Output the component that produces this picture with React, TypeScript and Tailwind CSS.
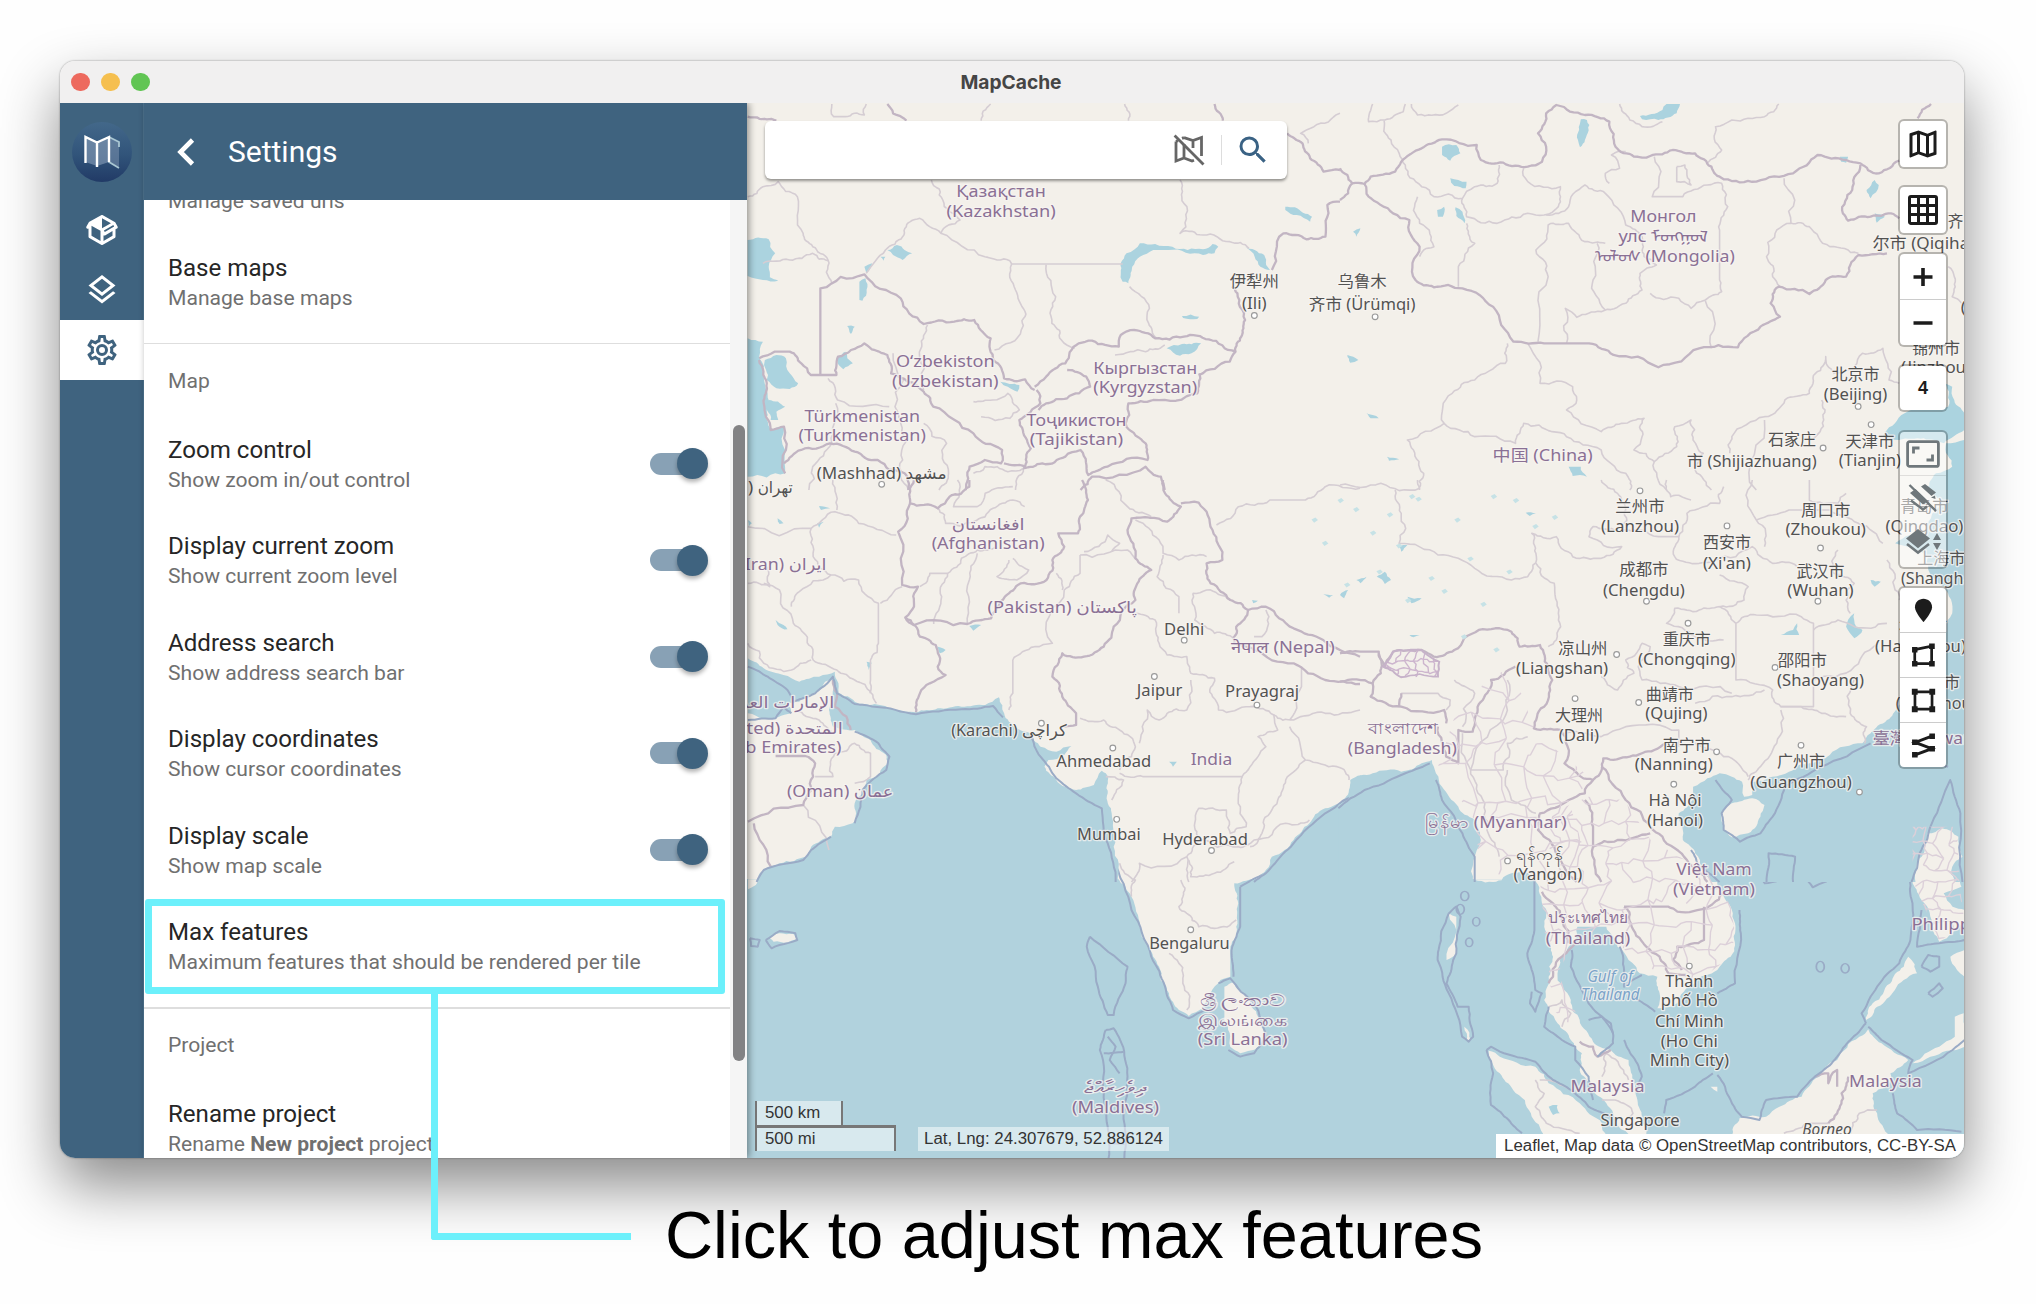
import React from "react";

/* ---------- geometry helpers ---------- */

type Pt = [number, number];

const parse = (s: string): Pt[] =>
  s.trim().split(/\s+/).map((p) => p.split(",").map(Number) as Pt);

function random(seed: number) {
  let s = (seed * 2654435761) >>> 0 || 1;
  return () => {
    s ^= s << 13;
    s >>>= 0;
    s ^= s >>> 17;
    s ^= s << 5;
    s >>>= 0;
    return s / 4294967296;
  };
}

/** Turns a coarse outline into a ragged one, as a surveyed border looks. */
function ragged(s: string, amount = 0.16, closed = false) {
  const pts = parse(s);
  if (closed) pts.push(pts[0]);
  const rnd = random(Math.round(pts[0][0] * 7 + pts[0][1] * 13 + pts.length));
  const out: Pt[] = [pts[0]];
  const split = (a: Pt, b: Pt, depth: number) => {
    const dx = b[0] - a[0];
    const dy = b[1] - a[1];
    if (depth === 0 || dx === 0 || dy === 0 || Math.hypot(dx, dy) < 12) {
      out.push(b);
      return;
    }
    const k = (rnd() - 0.5) * 2 * amount;
    const m: Pt = [(a[0] + b[0]) / 2 - dy * k, (a[1] + b[1]) / 2 + dx * k];
    split(a, m, depth - 1);
    split(m, b, depth - 1);
  };
  for (let i = 1; i < pts.length; i++) split(pts[i - 1], pts[i], 3);
  return "M" + out.map((p) => `${p[0].toFixed(1)} ${p[1].toFixed(1)}`).join("L") + (closed ? "Z" : "");
}

/** Irregular cells that fill a box. */
function cells(x: number, y: number, w: number, h: number, step: number) {
  const rnd = random(x + y + step);
  const cols = Math.ceil(w / step) + 1;
  const rows = Math.ceil(h / step) + 1;
  const g: Pt[][] = [];
  for (let r = 0; r <= rows; r++) {
    g.push([]);
    for (let c = 0; c <= cols; c++)
      g[r].push([
        x + (c + (r % 2) * 0.4 - 0.5) * step + (rnd() - 0.5) * step * 0.5,
        y + (r - 0.5) * step + (rnd() - 0.5) * step * 0.6,
      ]);
  }
  const edge = (a: Pt, b: Pt) => {
    const bend = () => (rnd() - 0.5) * step * 0.3;
    const p = (t: number) => `${(a[0] + (b[0] - a[0]) * t + bend()).toFixed(1)} ${(a[1] + (b[1] - a[1]) * t + bend()).toFixed(1)}`;
    return `M${a}L${p(0.33)}L${p(0.66)}L${b}`;
  };
  let d = "";
  for (let r = 0; r < rows; r++)
    for (let c = 0; c < cols; c++) {
      if (rnd() < 0.86) d += edge(g[r][c], g[r][c + 1]);
      if (rnd() < 0.78) d += edge(g[r][c], g[r + 1][c]);
    }
  return d;
}

type Region = {
  transform: string;
  sea?: string[];
  land?: string[];
  lakes?: string[];
  country?: string[];
  province?: string[];
  maritime?: string[];
};

/* ---------- map data, one entry for each sheet ---------- */

const NW: Region = {
  transform: "translate(740 90) scale(0.38265 0.33333)",
  lakes: [
    "20,450 75,448 92,490 75,530 78,562 100,572 60,570 20,558",
    "20,745 60,755 50,800 62,860 70,960 80,1020 115,1010 118,1150 20,1160",
    "65,810 95,795 120,805 130,850 152,880 130,897 95,895 70,870",
    "75,930 118,950 95,965 100,990 80,990",
    "995,520 1010,490 1045,460 1085,462 1130,470 1170,480 1210,478 1235,462 1250,470 1240,490 1210,495 1165,488 1120,480 1080,480 1045,500 1025,530 1015,580 1000,575",
    "1320,470 1345,480 1370,495 1375,525 1385,540 1360,530 1345,500",
    "1115,775 1155,762 1205,760 1180,790 1150,797",
    "1425,350 1450,352 1495,380 1490,395 1455,375 1425,360",
    "385,480 410,465 430,480 450,490 425,510 400,495",
    "255,800 275,785 295,820 270,838 258,825",
    "312,575 328,565 320,632 312,630",
    "280,708 300,710 290,732",
    "1155,678 1200,680 1195,687 1158,684",
    "680,875 730,885 725,905 700,890",
    "325,530 345,520 330,550",
    "367,500 380,500 375,512",
  ],
  country: [
    "20,80 70,88 95,92",
    "385,42 400,70 435,92",
    "1240,42 1262,92",
    "1430,130 1470,160 1490,205 1525,245 1568,240",
    "1568,335 1535,345 1530,440 1480,448 1420,430 1390,540",
    "210,855 210,595 325,553 420,625 480,702 560,695 612,690 655,745 662,810 690,865 745,868 770,900",
    "50,805 90,785 130,785 160,820 185,855 252,855 256,800 290,780 325,760 385,795 395,850 480,905 505,950 610,1030 685,1080 682,1120 640,1110 600,1130 590,1200",
    "770,890 800,860 850,820 885,760 920,752 990,770 995,735 1030,720 1085,745 1160,740 1225,748 1295,785 1310,740 1320,690 1300,610 1285,590",
    "1295,785 1280,815 1200,855",
    "775,900 785,940 730,990 750,1050 760,1075 745,1130 690,1120",
    "855,840 905,860 915,890 855,925 800,940 780,960",
    "1200,850 1195,910 1080,930 1015,940 1010,1010 1060,1060 1065,1110 960,1130 910,1155 890,1080 850,1100 790,1120 740,1135",
    "115,1120 160,1080 235,1060 300,1085 360,1110 390,1140 430,1150 440,1200",
    "890,1200 920,1160 1060,1130 1100,1160 1110,1200",
    "50,810 70,880 62,940 80,1020 115,1010 118,1150",
  ],
  province: [
    "240,42 245,80 275,80 325,75 330,42",
    "655,42 630,92",
    "1005,42 1015,92",
    "1568,70 1500,110 1465,130 1485,160",
    "20,320 60,290 100,275 150,320 165,430 190,470 230,510 240,580",
    "60,520 130,510 190,490 230,512",
    "500,270 530,330 575,390 525,430 470,385 445,395 425,440 380,480 330,550",
    "525,430 640,500 705,512 710,522 1000,522",
    "710,522 720,600 745,665 735,720 665,780",
    "800,524 825,620 815,700 840,750 875,775",
    "1150,270 1160,340 1150,430 1210,435 1280,455 1330,475",
    "1018,590 1070,655 1068,700 1090,745",
    "400,790 405,950 420,1000 425,1110 440,1200",
    "230,865 255,930 390,950",
    "490,705 475,770 480,900",
    "250,940 240,1060 190,1130 180,1200",
    "480,1000 540,1060 545,1150 520,1200",
    "610,935 660,930 700,910 730,960 705,985 630,980",
    "980,795 1060,785 1110,765",
    "610,1150 640,1130 700,1145 740,1135 720,1200",
  ],
};

const NE: Region = {
  transform: "translate(1340 90) scale(0.40816 0.33333)",
  lakes: [
    "250,170 285,165 295,190 270,212 250,195",
    "590,88 605,90 600,150 588,172 583,150",
    "735,78 790,60 800,42 833,42 825,70 780,90 740,88",
    "270,265 310,275 308,295 280,288",
    "238,360 255,350 252,380 240,380",
    "283,352 300,365 305,400 285,378",
    "32,425 50,415 40,440",
    "18,795 45,810 25,818",
    "1290,300 1310,270 1320,285 1300,325",
    "1225,200 1245,200 1240,218 1228,215",
    "560,1130 590,1130 605,1160 570,1158",
    "1310,370 1335,380 1315,398",
    "1340,1020 1390,965 1420,960 1490,950 1480,880 1500,890 1505,930 1530,980 1530,1020 1480,1060 1430,1045 1370,1050 1330,1040",
    "1485,1060 1530,1050 1530,1200 1440,1200 1460,1150 1500,1130",
    "60,965 80,975 95,985 75,985",
    "115,1100 145,1108 120,1112",
  ],
  country: [
    "0,235 30,280 60,282 75,260 135,245 150,215 200,175 250,148 335,165 345,210 400,218 460,230 495,215 505,170 485,130 505,70 530,45 600,75 660,95 675,170 720,200 760,198 815,180 870,190 910,230 940,268 1020,275 1110,250 1170,195 1240,210 1275,220 1320,250 1370,212",
    "60,282 70,320 130,370 170,390 195,470 185,570 230,592 300,595 375,650 425,755 500,760 610,760 670,795 780,832 880,775 975,772 1030,710 1078,680 1055,640 1075,590 1150,612 1190,570 1240,560 1270,495 1340,490",
    "1275,225 1255,300 1232,370 1245,392 1300,380 1350,370 1370,385",
    "1448,42 1415,85",
    "0,330 20,310 30,280",
  ],
  province: [
    "80,42 70,95 110,90 155,65 160,42",
    "175,42 190,75 260,70 290,45",
    "108,92 125,150 145,190 160,225 200,290 230,320 300,325 330,290 385,280 390,225",
    "190,320 195,400 230,470 205,480 195,500",
    "300,325 310,380 385,400 460,370 500,375 535,350 540,290 460,275 450,235",
    "290,590 290,530 330,460 310,400",
    "485,755 510,560 480,480 510,405 560,400 600,455 650,460",
    "505,375 560,350 600,285 650,310 700,405 740,440 745,500 775,525 735,550 740,600 700,640 640,665 580,682 552,655 555,760",
    "660,280 650,250 685,235 665,195 700,185",
    "770,200 765,320 840,320 900,285 935,280 950,350 930,420 930,570 935,605 895,630 860,655 830,625 760,610",
    "1088,265 1105,400 1150,410 1200,470 1270,490",
    "1105,400 1070,420 1045,500 1060,560 1078,590",
    "895,632 910,775",
    "685,42 710,90 740,110 790,95",
    "900,220 935,180 920,110 960,90 1040,80 1075,42",
    "825,230 845,225 850,255 860,285 825,275 825,230",
    "410,760 405,820 330,870 275,910 255,1000 165,1050 180,1080 205,1150 195,1200",
    "460,760 490,880 570,890 580,930 555,960 640,1025 690,1000 745,985 740,1040 720,1080 770,1115 800,1200",
    "255,1000 330,1040 430,1060 450,1000 520,1025 555,1040 640,1080 700,1150 710,1200",
    "770,1115 825,1070 820,1010 860,990 865,1050 890,1090 870,1140 910,1200",
    "955,1090 960,1040 1040,980 1090,930 1150,910 1165,850 1190,800 1210,850 1260,830 1280,790 1330,775 1345,870 1370,880",
    "1180,930 1185,990 1150,1050",
    "1040,990 1020,1200",
    "630,460 620,570 650,660",
    "1490,530 1505,560 1500,620 1530,660",
  ],
};

const W: Region = {
  transform: "translate(740 480) scale(0.39541 0.33333)",
  sea: [
    "20,535 60,565 110,585 150,605 200,590 240,575 245,600 250,640 290,665 340,672 445,697 500,685 560,680 620,675 655,652 668,700 700,745 735,760 760,800 800,815 838,798 820,825 780,840 770,860 800,900 850,930 895,915 915,872 925,880 930,940 940,1000 945,1100 955,1206 45,1206 50,1180 100,1150 170,1130 180,1100 230,1070 240,1040 285,1030 290,970 320,900 375,850 370,825 330,780 290,750 235,740 225,690 235,600 215,605 190,640 150,665 120,670 130,700 60,715 20,700",
    "1570,885 1540,930 1530,955 1480,985 1440,1030 1400,1080 1345,1130 1330,1170 1290,1206 1570,1206",
  ],
  lakes: [
    "200,78 228,85 205,90",
    "95,115 110,130 100,132",
    "195,130 212,125 200,143",
    "320,545 333,548 325,570",
    "495,495 520,510 505,520",
    "580,438 610,435 590,452",
    "90,420 110,435 120,448 95,435",
    "20,120 30,130 22,140",
    "1085,845 1105,845 1095,860",
    "1475,342 1500,345 1490,353",
    "1295,360 1310,362 1298,370",
  ],
  country: [
    "440,0 430,70 400,155 410,315 450,320 440,380 418,412 440,435 575,432 635,415 670,350 710,310 775,300 790,240 820,200 805,160 855,160 860,110 880,60 865,0",
    "430,70 500,85 530,50 580,20 580,0",
    "418,412 455,470 495,495 500,560 520,585 480,610 455,640 445,697",
    "1070,0 1075,40 1115,80 1080,125 990,115 980,150 1000,235 1040,270 1005,310 1000,360 945,440 920,500 870,530 815,520 790,590 815,650 850,700 850,735 820,740",
    "1115,70 1160,68 1195,150 1220,240 1180,250 1190,310 1240,360 1285,390 1330,380 1400,445 1475,480 1568,530",
    "1285,390 1255,440 1250,490 1300,510 1400,550 1480,600 1568,612",
    "20,1025 160,975 185,890 190,850 165,828 90,828",
    "35,1030 78,1160",
    "235,600 240,680 280,750",
  ],
  province: [
    "20,140 180,145 240,95 300,130 395,165",
    "235,0 245,90",
    "180,145 185,230 230,285 300,300 350,370 350,490 330,540 330,600 345,670",
    "60,310 100,330 135,430 170,480 185,540 245,570 290,600 330,640",
    "230,285 150,335 130,380",
    "20,490 60,550 130,570 180,540",
    "20,310 75,320 70,260",
    "410,320 355,370",
    "455,320 480,280 525,280 560,235 600,210 650,200",
    "525,280 510,350 490,432",
    "600,220 580,300 575,432",
    "680,240 650,290 700,300 730,270 690,235",
    "860,225 860,280 820,330 790,490 745,500 690,540 690,640 680,690",
    "800,280 815,330",
    "860,225 980,210 1005,240",
    "870,215 930,165 960,190 940,215",
    "550,0 540,80 600,80 620,40 690,20",
    "500,85 520,130 590,125 640,85 690,60 720,80",
    "925,0 980,80 1040,110",
    "1000,120 1060,180 1070,220 1110,240 1180,230",
    "1070,225 1055,290 1110,350 1110,400",
    "1000,400 1050,420 1060,490 1080,525 1130,530 1140,580 1200,595 1195,650 1210,690 1290,680 1350,705 1360,750 1310,770 1330,800 1290,860 1270,890 1020,890 960,880",
    "1145,340 1150,420 1200,460 1250,475",
    "1145,340 1180,330 1240,360",
    "860,715 920,720 960,750 1000,800 990,830 960,870",
    "1010,790 1030,690 1060,720 1080,700 1130,690 1140,600",
    "1270,890 1260,960 1280,1040 1240,1060 1230,990 1160,985 1150,1030 1160,1080 1130,1130 1010,1150 990,1206",
    "1350,705 1400,720 1480,700 1568,690",
    "1420,560 1420,620 1390,720",
    "1390,740 1430,840 1510,860 1540,900",
    "1430,840 1380,900 1360,960 1340,1000 1320,1060 1290,1100",
    "925,890 970,900 940,960",
    "1160,1080 1260,1100 1300,1080 1380,1030 1440,1020",
    "190,890 235,890 240,820 290,790 330,820 330,890 290,910",
    "160,975 225,1110",
    "140,690 200,720 235,760",
    "1205,135 1260,80 1340,60 1430,60 1480,20 1568,25",
    "1330,390 1320,470 1300,470",
    "1130,1130 1135,1206",
  ],
  maritime: [
    "20,560 70,590 120,630 135,665 190,640 235,590 245,640 290,672 340,680 445,703 560,688 640,678 665,712",
    "735,765 760,830 800,895 850,940 915,985 930,1090 950,1206",
    "290,755 350,790 378,830 370,870 310,930 290,1030",
    "1568,930 1480,1000 1400,1090 1345,1160 1300,1206",
    "20,720 90,715 110,680 130,700",
    "230,1070 180,1110 160,1140 60,1170 42,1206",
  ],
};

const E: Region = {
  transform: "translate(1340 480) scale(0.40816 0.33333)",
  sea: [
    "-4,975 20,960 25,900 80,880 150,875 200,850 225,840 235,880 250,920 290,980 330,1020 345,1080 325,1206 -4,1206",
    "865,920 900,895 930,880 960,890 985,905 990,950 1010,945 1010,905 1060,890 1100,875 1150,850 1200,825 1280,790 1300,760 1340,720 1365,680 1420,600 1470,500 1500,400 1480,320 1450,290 1440,230 1400,200 1360,190 1440,150 1475,60 1440,20 1480,-4 1534,-4 1534,1206 910,1206 870,1120 840,1080 830,1000 865,960",
    "400,1192 425,1178 462,1180 472,1206 395,1206",
  ],
  land: [
    "935,1000 960,970 1010,955 1040,975 1030,1010 1000,1060 960,1072 940,1050",
    "1410,1206 1425,1130 1440,1060 1475,1045 1515,1070 1525,1130 1500,1160 1505,1206",
  ],
  lakes: [
    "90,290 110,275 125,300 110,312",
    "165,350 200,355 175,370",
    "455,98 480,100 465,108",
    "1080,465 1110,450 1120,430 1125,465",
    "1240,440 1260,400 1265,440 1280,450 1260,475",
    "1300,300 1325,305 1310,320",
    "40,300 65,290 50,310",
    "170,465 195,465 180,472",
    "145,200 165,195 150,215",
    "0,345 20,330 10,355",
  ],
  country: [
    "0,520 50,515 95,515 110,560 130,515 200,510 230,530 280,510 340,450 420,455 440,500 490,495 510,560 520,600 500,680 475,745 540,750 550,850 590,890 620,900 645,835 710,830 770,810 800,790",
    "0,605 80,610 100,580 95,520",
    "80,610 75,650 150,680 255,690 260,730",
    "150,640 145,680",
    "430,560 370,600 350,660 330,720 325,755 290,750 290,850 260,830 240,740",
    "620,900 600,940 560,960 490,1000 485,1050 525,1100 580,1206",
    "640,860 700,960 760,1040 790,1070 850,1140 900,1206",
    "620,1100 680,1080 760,1060",
    "600,960 620,1040 620,1100 640,1206",
  ],
  province: [
    "0,15 100,10 195,25 190,0",
    "135,30 150,100 145,190 240,225 330,265 420,300 460,290 480,220 470,160 530,170 570,230 640,235 690,200 610,170 620,140 680,150",
    "480,250 525,310 535,400 530,480 510,500",
    "640,0 680,40 700,90 690,150 780,170 830,170 820,230 880,250 920,240 1010,200 1060,250 1120,260",
    "930,285 1000,320 990,360 930,380 880,390 820,385 800,430 870,470 940,480",
    "930,380 970,430 970,600 1060,630 1080,680 1160,680 1160,580 1160,430 1130,410 1020,405 970,430",
    "1160,450 1220,420 1260,440 1340,430",
    "1160,600 1260,560 1320,480",
    "640,590 680,630 720,580 700,540 740,490 760,500 740,600 830,620 960,640",
    "540,760 640,770 700,740 830,750 830,800",
    "1080,690 1070,790 1030,860 1000,900",
    "1080,680 1130,680 1180,700 1240,710",
    "1260,600 1250,700 1290,740 1285,790",
    "1010,0 1020,120 1040,200",
    "1150,0 1150,60 1220,70 1240,40",
    "1020,120 1100,90 1200,90 1270,130 1330,190",
    "830,170 850,100 930,70 940,20",
    "800,0 810,50 860,60",
    "1220,210 1210,280 1260,310 1240,360 1250,400",
    "1340,240 1360,330 1370,360",
    "410,600 400,720 320,870 400,870 410,790 460,770",
    "300,760 320,870 350,960 360,1050 390,1130",
    "150,640 240,640 270,660 260,690",
    "410,870 420,960 480,1000",
    "870,790 940,830 1000,890",
    "870,670 960,650 1040,630",
    "280,600 330,640 300,740",
  ],
  maritime: [
    "235,900 250,960 300,1060 330,1130 330,1206",
    "-4,985 60,930 150,885 220,850",
    "1300,790 1180,860 1090,920 1060,1010 1030,1060 980,1085 940,1050 935,1000 960,960 920,900",
    "1045,1206 1050,1120 1115,1130 1110,1206",
    "1400,1206 1420,1120 1450,1030 1495,900 1520,1000 1525,1206",
    "860,1110 880,1160 930,1206",
    "1480,700 1450,850 1490,860",
  ],
};

const SW: Region = {
  transform: "translate(740 860) scale(0.39541 0.33333)",
  land: [
    "955,55 975,80 990,110 1010,200 1030,260 1060,320 1085,400 1110,450 1135,468 1170,445 1190,400 1215,360 1240,350 1240,260 1255,200 1260,130 1250,70 1280,62 1300,55",
    "1225,380 1250,368 1280,410 1310,470 1325,520 1305,568 1265,580 1240,560 1225,480",
    "20,58 48,58 40,75 20,88",
    "75,235 100,220 135,222 145,235 120,248 85,245",
  ],
  province: [
    "960,10 1000,60 990,110",
    "1115,60 1120,110 1110,140 1130,160 1160,200 1200,205 1255,180",
    "1085,280 1110,310 1120,370 1130,450",
    "1135,0 1140,50 1200,40 1250,5",
  ],
  maritime: [
    "885,230 980,320 975,370 945,465 930,465 905,380 877,260 885,230",
    "945,-4 990,150 1040,290 1075,380 1095,450 1135,475 1175,450",
    "1265,80 1265,200 1245,260 1248,350",
    "925,510 945,505 965,550 980,650 970,760 972,895",
    "925,510 910,570 920,700 930,800 932,895",
    "1370,-4 1330,40 1265,80",
    "1210,370 1240,355 1300,430 1330,530 1300,580 1265,590 1235,570",
    "65,240 80,265 100,255 145,240 140,220 100,213 65,240",
    "25,235 50,240 45,260 28,258 25,235",
    "930,530 950,560 935,600 960,640",
    "920,580 970,575",
    "935,850 972,852",
  ],
};

const SE: Region = {
  transform: "translate(1340 860) scale(0.44389 0.33333)",
  land: [
    "300,58 310,62 345,66 370,58",
    "438,56 455,130 460,200 470,240 480,290 470,350 460,420 468,450 490,490 520,540 545,580 540,630 570,680 600,730 620,790 650,822 690,822 680,780 670,720 660,660 650,600 610,570 570,545 540,480 520,420 500,380 490,340 500,290 515,260 530,240 535,200 600,200 625,260 650,300 675,340 715,350 720,400 715,445 760,430 800,370 850,330 880,290 890,220 880,140 860,90 845,56",
    "335,572 360,590 440,620 470,670 540,730 590,790 600,830 460,830 430,760 390,690 360,640",
    "880,830 900,775 960,770 990,740 1040,710 1080,650 1120,600 1170,530 1190,508 1220,550 1280,600 1240,640 1230,680 1200,700 1210,760 1240,830",
    "1185,480 1200,430 1240,370 1270,320 1280,290 1300,340 1250,390 1210,440",
    "1290,56 1395,56 1400,80 1360,100 1380,140 1407,150 1407,190 1350,245 1335,200 1310,120",
    "1385,470 1405,460 1407,560 1330,590 1290,610 1350,560 1385,530",
    "1375,290 1407,270 1407,350 1390,330",
    "245,160 262,170 262,280 240,300",
    "280,500 295,540 285,542",
    "835,680 850,680 850,695",
  ],
  lakes: ["470,740 490,735 495,760 480,765", "640,400 650,410 645,425"],
  country: [
    "640,140 740,140 760,155 830,140 870,90",
    "640,140 655,190 690,260 720,290 740,340 780,345",
    "820,140 820,240 760,260 750,300 770,330",
    "530,240 500,290 470,370",
    "540,545 570,560 580,590 610,570",
    "455,95 480,130 500,180 515,250",
    "1100,790 1120,760 1130,700 1145,650",
    "1070,650 1100,640 1100,670 1120,630 1120,680",
  ],
  province: [
    "440,660 460,700 440,740 465,790 540,820",
    "590,650 600,580 640,640 650,660",
    "590,720 620,720 660,760 640,790",
    "1150,820 1170,760 1210,750",
    "1000,820 1050,790 1100,790",
    "470,440 500,420 520,460 500,500",
    "450,660 520,690",
  ],
  maritime: [
    "438,60 438,200 422,280 430,320 440,390 455,400 440,455 428,430 432,395",
    "522,270 520,320 560,430 610,490 615,550 580,590",
    "330,570 340,560 360,575 440,605 480,660 520,690 560,740 610,770",
    "330,570 345,640 340,735 380,780 410,820",
    "470,440 460,500 500,540 530,560 530,600 560,650 570,720",
    "900,150 903,220 890,370 850,400",
    "630,260 640,330 640,380 680,345",
    "840,640 800,680 735,720 730,760",
    "850,645 880,720 905,770 945,780 960,720 1030,710 1080,640 1120,590 1150,540 1185,490",
    "1185,490 1175,460 1210,380 1260,310 1285,240 1290,140 1285,56",
    "1190,500 1220,540 1290,600 1280,640 1380,570 1407,540",
    "1245,700 1255,760 1300,810 1400,815",
    "955,70 955,0 1025,0 1030,50 955,70",
    "1055,65 1075,35 1105,40 1095,65 1065,82 1055,65",
    "640,540 660,590 680,650 670,700",
    "560,480 590,470 615,520",
    "245,160 262,140 272,170 262,280 255,300 240,370 265,440 290,440 300,530 290,545 275,530 245,400 220,300 222,270 245,160",
    "1310,320 1325,285 1350,290 1350,320 1330,335 1310,320",
    "1325,400 1350,370 1358,385 1335,410 1325,400",
    "660,410 710,455",
    "1310,150 1300,260 1350,250 1407,240",
  ],
};

const ISLES: [number, number, number, number][] = [
  [281, 108, 9, 14],
  [271, 148, 9, 15],
  [307, 185, 8, 13],
  [291, 247, 8, 13],
  [1082, 320, 9, 16],
  [1138, 325, 9, 14],
];

const DRY_SPOTS: Pt[] = [
  [1030, 385], [1042, 392], [1055, 410], [1010, 400], [1075, 420], [1090, 384], [1060, 440], [1100, 445], [1035, 450],
  [1120, 400], [1130, 430], [1082, 462], [1140, 465], [1165, 385], [1180, 405], [1125, 490], [1110, 455], [1018, 418],
  [1195, 398], [1150, 500], [1085, 382], [1068, 396], [1148, 382], [1160, 440],
];

const LINE = { fill: "none", vectorEffect: "non-scaling-stroke" as const, strokeLinejoin: "round" as const };

function Sheet({ r }: { r: Region }) {
  return (
    <g transform={r.transform}>
      {r.sea?.map((s) => (
        <path key={s} d={ragged(s, 0.12, true)} fill="#b1d2dd" />
      ))}
      {r.land?.map((s) => (
        <path key={s} d={ragged(s, 0.12, true)} fill="#f3f0ea" />
      ))}
      {r.lakes?.map((s) => (
        <path key={s} d={ragged(s, 0.14, true)} fill="#abd3df" />
      ))}
      {r.province?.map((s) => (
        <path key={s} d={ragged(s)} stroke="#d5cdd3" strokeWidth={1.6} {...LINE} />
      ))}
      {r.country?.map((s) => (
        <path key={s} d={ragged(s, 0.13)} stroke="#c2b5c3" strokeWidth={2.3} {...LINE} />
      ))}
      {r.maritime?.map((s) => (
        <path key={s} d={ragged(s, 0.05)} stroke="#9aabc6" strokeWidth={2} {...LINE} />
      ))}
    </g>
  );
}

/* ---------- map labels: text, centre, baseline, width, kind ---------- */

type Kind = "c" | "t" | "w" | "b";
const LABELS: [string, number, number, number, Kind][] = [
  ["Қазақстан", 771, 152, 69, "c"],
  ["(Kazakhstan)", 771, 167, 84, "c"],
  ["Монгол", 1281, 171, 51, "c"],
  ["улс ᠮᠣᠩᠭᠣᠯ", 1281, 186, 69, "c"],
  ["ᠤᠯᠤᠰ (Mongolia)", 1282, 202, 108, "c"],
  ["O‘zbekiston", 728, 283, 76, "c"],
  ["(Uzbekistan)", 728, 298, 82, "c"],
  ["Кыргызстан", 882, 288, 80, "c"],
  ["(Kyrgyzstan)", 882, 303, 80, "c"],
  ["Türkmenistan", 664, 325, 89, "c"],
  ["(Turkmenistan)", 664, 340, 98, "c"],
  ["Тоҷикистон", 829, 328, 77, "c"],
  ["(Tajikistan)", 829, 343, 72, "c"],
  ["(Mashhad) مشهد", 679, 369, 100, "t"],
  ["تهران", 597, 380, 27, "t"],
  [")", 578, 380, 4, "t"],
  ["افغانستان", 761, 408, 56, "c"],
  ["(Afghanistan)", 761, 423, 87, "c"],
  ["Iran) ایران", 605, 439, 63, "c"],
  ["(Pakistan) پاکستان", 818, 472, 115, "c"],
  ["Delhi", 912, 489, 31, "t"],
  ["नेपाल (Nepal)", 988, 503, 80, "c"],
  ["Jaipur", 893, 536, 35, "t"],
  ["Prayagraj", 972, 537, 57, "t"],
  ["الإمارات العر", 606, 545, 73, "c"],
  ["ted) المتحدة", 612, 565, 74, "c"],
  ["b Emirates)", 611, 580, 74, "c"],
  ["(Karachi) کراچی", 777, 567, 89, "t"],
  ["Ahmedabad", 850, 591, 73, "t"],
  ["India", 933, 589, 32, "c"],
  ["(Oman) عمان", 647, 614, 82, "c"],
  ["Mumbai", 854, 647, 49, "t"],
  ["Hyderabad", 928, 651, 66, "t"],
  ["Bengaluru", 916, 731, 62, "t"],
  ["বাংলাদেশ", 1080, 565, 53, "c"],
  ["(Bangladesh)", 1080, 581, 84, "c"],
  ["မြန်မာ (Myanmar)", 1152, 638, 109, "c"],
  ["ရန်ကုန်", 1186, 662, 37, "t"],
  ["(Yangon)", 1192, 678, 53, "t"],
  ["ประเทศไทย", 1223, 711, 61, "c"],
  ["(Thailand)", 1223, 727, 65, "c"],
  ["Việt Nam", 1320, 674, 58, "c"],
  ["(Vietnam)", 1320, 689, 63, "c"],
  ["Gulf of", 1240, 756, 35, "w"],
  ["Thailand", 1240, 770, 45, "w"],
  ["Thành", 1301, 760, 37, "t"],
  ["phố Hồ", 1301, 775, 44, "t"],
  ["Chí Minh", 1301, 791, 53, "t"],
  ["(Ho Chi", 1301, 806, 44, "t"],
  ["Minh City)", 1301, 821, 61, "t"],
  ["Malaysia", 1238, 841, 57, "c"],
  ["Singapore", 1263, 867, 61, "t"],
  ["Malaysia", 1452, 837, 56, "c"],
  ["Borneo", 1407, 874, 38, "b"],
  ["Philipp", 1495, 716, 46, "c"],
  ["ශ්‍රී ලංකාව", 957, 775, 66, "c"],
  ["இலங்கை", 957, 790, 68, "c"],
  ["(Sri Lanka)", 957, 805, 69, "c"],
  ["ދިވެހިރާއްޖެ", 859, 842, 48, "c"],
  ["(Maldives)", 859, 857, 67, "c"],
  ["伊犁州", 966, 221, 38, "t"],
  ["(Ili)", 966, 238, 19, "t"],
  ["乌鲁木", 1049, 221, 38, "t"],
  ["齐市 (Ürümqi)", 1049, 239, 82, "t"],
  ["中国 (China)", 1188, 355, 77, "c"],
  ["北京市", 1429, 293, 37, "t"],
  ["(Beijing)", 1429, 308, 49, "t"],
  ["石家庄", 1380, 343, 37, "t"],
  ["市 (Shijiazhuang)", 1349, 360, 100, "t"],
  ["天津市", 1440, 344, 38, "t"],
  ["(Tianjin)", 1440, 359, 48, "t"],
  ["齐", 1506, 175, 12, "t"],
  ["尔市 (Qiqihar)", 1484, 192, 84, "t"],
  ["锦州市", 1491, 273, 37, "t"],
  ["(Jinzhou)", 1491, 287, 54, "t"],
  ["(", 1512, 241, 4, "t"],
  ["兰州市", 1263, 394, 38, "t"],
  ["(Lanzhou)", 1263, 410, 60, "t"],
  ["周口市", 1406, 397, 38, "t"],
  ["(Zhoukou)", 1406, 412, 62, "t"],
  ["青岛市", 1482, 394, 37, "t"],
  ["(Qingdao)", 1482, 410, 60, "t"],
  ["西安市", 1330, 422, 37, "t"],
  ["(Xi'an)", 1330, 438, 37, "t"],
  ["成都市", 1266, 443, 38, "t"],
  ["(Chengdu)", 1266, 459, 63, "t"],
  ["武汉市", 1402, 444, 37, "t"],
  ["(Wuhan)", 1402, 459, 51, "t"],
  ["上海市", 1495, 434, 37, "t"],
  ["(Shanghai)", 1495, 450, 62, "t"],
  ["凉山州", 1219, 504, 38, "t"],
  ["(Liangshan)", 1203, 519, 71, "t"],
  ["重庆市", 1299, 497, 37, "t"],
  ["(Chongqing)", 1299, 512, 75, "t"],
  ["杭州市", 1481, 487, 37, "t"],
  ["(Hangzhou)", 1479, 502, 70, "t"],
  ["邵阳市", 1388, 513, 38, "t"],
  ["(Shaoyang)", 1402, 528, 67, "t"],
  ["温州市", 1491, 530, 37, "t"],
  ["(Wenzhou)", 1491, 546, 62, "t"],
  ["曲靖市", 1286, 539, 37, "t"],
  ["(Qujing)", 1291, 554, 48, "t"],
  ["大理州", 1216, 555, 37, "t"],
  ["(Dali)", 1216, 571, 31, "t"],
  ["南宁市", 1299, 578, 37, "t"],
  ["(Nanning)", 1289, 593, 60, "t"],
  ["广州市", 1387, 591, 37, "t"],
  ["(Guangzhou)", 1387, 607, 78, "t"],
  ["臺灣 (Taiwan)", 1483, 573, 82, "c"],
  ["Hà Nội", 1290, 621, 41, "t"],
  ["(Hanoi)", 1290, 636, 43, "t"],
];

const TOWNS: Pt[] = [
  [966, 243], [1059, 244], [679, 373], [912, 493], [889, 521], [968, 543], [802, 557], [857, 576], [860, 631], [933, 655],
  [917, 716], [1263, 378], [1402, 422], [1330, 405], [1268, 463], [1400, 463], [1300, 480], [1245, 504], [1367, 514],
  [1262, 541], [1322, 579], [1387, 574], [1289, 604], [1431, 313], [1404, 345], [1441, 327], [1161, 663],
  [1301, 744], [1213, 538], [1432, 610],
];

const LABEL_STYLE: Record<Kind, { fill: string; className: string }> = {
  c: { fill: "#8a7095", className: "" },
  t: { fill: "#525252", className: "" },
  w: { fill: "#7ba3c9", className: "italic" },
  b: { fill: "#525252", className: "italic" },
};

function WorldMap() {
  return (
    <svg
      className="block h-full w-full font-['Noto_Sans','Noto_Sans_CJK_SC','DejaVu_Sans',sans-serif]"
      viewBox="747 103 1217 1055"
      preserveAspectRatio="none"
    >
      <defs>
        <clipPath id="indochina">
          <path
            transform={SE.transform}
            d="M438-120L560-190L640-180L700-60L850 56L880 140L890 220L880 290L800 370L740 350L660 300L600 200L530 240L490 340L560 540L480 450L460 200Z"
          />
        </clipPath>
        <clipPath id="bhutan">
          <path transform={E.transform} d="M105 560L130 515L200 510L243 545L240 590L150 592Z" />
        </clipPath>
        <clipPath id="philippines">
          <path transform={SE.transform} d="M1290-100L1390-100L1395 60L1407 190L1350 245L1290 60Z" />
        </clipPath>
        <clipPath id="burma">
          <path transform={E.transform} d="M300 640L420 560L480 760L620 900L560 960L620 1200L345 1180L330 1020L240 860Z" />
        </clipPath>
      </defs>
      <rect x="747" y="103" width="1217" height="1055" fill="#f3f0ea" />
      <rect x="747" y="879" width="1217" height="279" fill="#b1d2dd" />
      <Sheet r={SW} />
      <Sheet r={SE} />
      <Sheet r={W} />
      <Sheet r={E} />
      <Sheet r={NW} />
      <Sheet r={NE} />
      <g fill="none" stroke="#dcd0d9" strokeWidth="1.4">
        <path clipPath="url(#indochina)" d={cells(1530, 790, 220, 220, 21)} />
        <path clipPath="url(#burma)" d={cells(1430, 680, 180, 200, 26)} />
        <path clipPath="url(#philippines)" d={cells(1900, 820, 70, 130, 14)} />
        <path clipPath="url(#bhutan)" d={cells(1380, 645, 65, 36, 10)} stroke="#cdb5ce" />
      </g>
      <path
        transform={E.transform}
        d={ragged("105,560 130,515 200,510 243,545 240,590 150,592", 0.1, true)}
        fill="none"
        stroke="#c6b2c9"
        strokeWidth="5"
      />
      <g transform={SE.transform} fill="none" stroke="#9aabc6" strokeWidth="4">
        {ISLES.map(([cx, cy, rx, ry]) => (
          <ellipse key={cx} cx={cx} cy={cy} rx={rx} ry={ry} />
        ))}
      </g>
      <g transform="scale(1.2985)">
        {DRY_SPOTS.map(([x, y]) => (
          <path key={`${x}-${y}`} d={`M${x} ${y}l3 -1.5l2 2l-3 2z`} fill="#c6e2e6" />
        ))}
        {TOWNS.map(([x, y]) => (
          <circle key={`${x}-${y}`} cx={x} cy={y} r="2.2" fill="#fff" stroke="#9a9a9a" strokeWidth="0.9" />
        ))}
        {LABELS.map(([text, x, y, w, kind], i) => (
          <text
            key={i}
            x={x - w / 2}
            y={y}
            textLength={w}
            lengthAdjust="spacingAndGlyphs"
            fontSize="12.4"
            fill={LABEL_STYLE[kind].fill}
            className={LABEL_STYLE[kind].className}
            stroke="#f7f4f1"
            strokeOpacity="0.75"
            strokeWidth="2"
            strokeLinejoin="round"
            paintOrder="stroke"
          >
            {text}
          </text>
        ))}
      </g>
    </svg>
  );
}

/* ---------- icons ---------- */

const ICONS = {
  cog: "M12,8A4,4 0 0,1 16,12A4,4 0 0,1 12,16A4,4 0 0,1 8,12A4,4 0 0,1 12,8M12,10A2,2 0 0,0 10,12A2,2 0 0,0 12,14A2,2 0 0,0 14,12A2,2 0 0,0 12,10M10,22C9.75,22 9.54,21.82 9.5,21.58L9.13,18.93C8.5,18.68 7.96,18.34 7.44,17.94L4.95,18.95C4.73,19.03 4.46,18.95 4.34,18.73L2.34,15.27C2.21,15.05 2.27,14.78 2.46,14.63L4.57,12.97L4.5,12L4.57,11L2.46,9.37C2.27,9.22 2.21,8.95 2.34,8.73L4.34,5.27C4.46,5.05 4.73,4.96 4.95,5.05L7.44,6.05C7.96,5.66 8.5,5.32 9.13,5.07L9.5,2.42C9.54,2.18 9.75,2 10,2H14C14.25,2 14.46,2.18 14.5,2.42L14.87,5.07C15.5,5.32 16.04,5.66 16.56,6.05L19.05,5.05C19.27,4.96 19.54,5.05 19.66,5.27L21.66,8.73C21.79,8.95 21.73,9.22 21.54,9.37L19.43,11L19.5,12L19.43,13L21.54,14.63C21.73,14.78 21.79,15.05 21.66,15.27L19.66,18.73C19.54,18.95 19.27,19.04 19.05,18.95L16.56,17.95C16.04,18.34 15.5,18.68 14.87,18.93L14.5,21.58C14.46,21.82 14.25,22 14,22H10M11.25,4L10.88,6.61C9.68,6.86 8.62,7.5 7.85,8.39L5.44,7.35L4.69,8.65L6.8,10.2C6.4,11.37 6.4,12.64 6.8,13.8L4.68,15.36L5.43,16.66L7.86,15.62C8.63,16.5 9.68,17.14 10.87,17.38L11.24,20H12.76L13.13,17.39C14.32,17.14 15.37,16.5 16.14,15.62L18.57,16.66L19.32,15.36L17.2,13.81C17.6,12.64 17.6,11.37 17.2,10.2L19.31,8.65L18.56,7.35L16.15,8.39C15.38,7.5 14.32,6.86 13.12,6.62L12.75,4H11.25Z",
  layers:
    "M12,18.54L19.37,12.8L21,14.07L12,21.07L3,14.07L4.62,12.81L12,18.54M12,16L3,9L12,2L21,9L12,16M12,4.53L6.26,9L12,13.47L17.74,9L12,4.53Z",
  box: "M2,10.96C1.5,10.68 1.35,10.07 1.63,9.59L3.13,7C3.24,6.8 3.41,6.66 3.6,6.58L11.43,2.18C11.59,2.06 11.79,2 12,2C12.21,2 12.41,2.06 12.57,2.18L20.47,6.62C20.66,6.72 20.82,6.88 20.91,7.08L22.36,9.6C22.64,10.08 22.47,10.69 22,10.96L21,11.54V16.5C21,16.88 20.79,17.21 20.47,17.38L12.57,21.82C12.41,21.94 12.21,22 12,22C11.79,22 11.59,21.94 11.43,21.82L3.53,17.38C3.21,17.21 3,16.88 3,16.5V10.96C2.7,11.13 2.32,11.14 2,10.96M12,4.15V10.85L17.96,7.5L12,4.15M5,15.91L11,19.29V12.58L5,9.21V15.91M19,15.91V12.69L14,15.59C13.67,15.77 13.3,15.76 13,15.6V19.29L19,15.91M13.85,13.36L20.13,9.73L19.55,8.72L13.27,12.35L13.85,13.36Z",
  magnify:
    "M9.5,3A6.5,6.5 0 0,1 16,9.5C16,11.11 15.41,12.59 14.44,13.73L14.71,14H15.5L20.5,19L19,20.5L14,15.5V14.71L13.73,14.44C12.59,15.41 11.11,16 9.5,16A6.5,6.5 0 0,1 3,9.5A6.5,6.5 0 0,1 9.5,3M9.5,5C7,5 5,7 5,9.5C5,12 7,14 9.5,14C12,14 14,12 14,9.5C14,7 12,5 9.5,5Z",
  map: "M20.5,3L20.34,3.03L15,5.1L9,3L3.36,4.9C3.15,4.97 3,5.15 3,5.38V20.5A0.5,0.5 0 0,0 3.5,21L3.66,20.97L9,18.9L15,21L20.64,19.1C20.85,19.03 21,18.85 21,18.62V3.5A0.5,0.5 0 0,0 20.5,3M10,5.47L14,6.87V18.53L10,17.13V5.47M5,6.46L8,5.45V17.15L5,18.31V6.46M19,17.54L16,18.55V6.86L19,5.7V17.54Z",
  grid: "M10,4V8H14V4H10M16,4V8H20V4H16M16,10V14H20V10H16M16,16V20H20V16H16M14,20V16H10V20H14M8,20V16H4V20H8M8,14V10H4V14H8M8,8V4H4V8H8M10,14H14V10H10V14M4,2H20A2,2 0 0,1 22,4V20A2,2 0 0,1 20,22H4C2.92,22 2,21.1 2,20V4A2,2 0 0,1 4,2Z",
};

function Icon({ name, className }: { name: keyof typeof ICONS; className: string }) {
  return (
    <svg viewBox="0 0 24 24" fill="currentColor" fillRule="evenodd" className={className}>
      <path d={ICONS[name]} />
    </svg>
  );
}

function Logo() {
  return (
    <svg viewBox="0 0 60 60" className="h-[60px] w-[60px]">
      <defs>
        <linearGradient id="disc" x1="0" y1="0" x2="0" y2="1">
          <stop offset="0" stopColor="#43688a" />
          <stop offset="0.55" stopColor="#31547a" />
          <stop offset="1" stopColor="#213a66" />
        </linearGradient>
      </defs>
      <circle cx="30" cy="30" r="30" fill="url(#disc)" />
      <path d="M13.5 15L25 20V44L13.5 40Z M25 20L37 15V40L25 44Z" fill="#8ba0ba" fillOpacity="0.6" />
      <path d="M37 15L47 20V45L37 40Z" fill="#8ba0ba" fillOpacity="0.45" />
      <path d="M37 15L47 20V25M37 15V40L47 46" fill="none" stroke="#a9c6d2" strokeWidth="1.8" />
      <path d="M13.5 41V15L25 20.5L37 15V40M25 20.5V45" fill="none" stroke="#fff" strokeWidth="2.4" />
    </svg>
  );
}

function MapOffIcon() {
  return (
    <svg viewBox="0 0 32 32" className="h-8 w-8" fill="none" stroke="#666" strokeWidth="2.8">
      <path d="M3 7.5V27L11 24L19 27L21 26.2M3 7.5L5 6.6M11 10V24M11 3.6L20 6.6L28.5 3.4V22M20 6.6V14M11 3.6L9 4.4" />
      <path d="M1.6 1.6L30.5 30.5" />
    </svg>
  );
}

const DRAW_ICONS: { key: string; body: React.ReactNode }[] = [
  {
    key: "point",
    body: <path d="M12 .8C7.6 .8 3.8 4.2 3.8 8.8C3.8 13.9 12 23 12 23S20.2 13.9 20.2 8.8C20.2 4.2 16.4 .8 12 .8Z" />,
  },
  {
    key: "polygon",
    body: (
      <>
        <path d="M3.6 6.4L19.8 3V19.8H3.6Z" fill="none" stroke="currentColor" strokeWidth="2.6" />
        <path d="M1 3.8h5.2v5.2h-5.2zM17.4 .4h5.4v5.4h-5.4zM17.4 17.2h5.4v5.4h-5.4zM1 17.2h5.2v5.4h-5.2z" />
      </>
    ),
  },
  {
    key: "rectangle",
    body: (
      <>
        <path d="M3.8 3.8H20.2V20.2H3.8Z" fill="none" stroke="currentColor" strokeWidth="2.6" />
        <path d="M.8 .8h5.6v5.6h-5.6zM17.6 .8h5.6v5.6h-5.6zM17.6 17.6h5.6v5.6h-5.6zM.8 17.6h5.6v5.6h-5.6z" />
      </>
    ),
  },
  {
    key: "line",
    body: (
      <>
        <path d="M20 3L4 9L20 15L4 21" fill="none" stroke="currentColor" strokeWidth="2.8" />
        <path d="M17.6 .4h5.4v5.4h-5.4zM1 6.2h5.4v5.4h-5.4zM17.6 12.4h5.4v5.4h-5.4zM1 18.2h5.4v5.4h-5.4z" />
      </>
    ),
  },
];

/* ---------- panel ---------- */

function Toggle() {
  return (
    <span className="relative mb-0.5 mr-[23px] flex h-[22px] w-[57px] shrink-0 items-center rounded-full bg-[#88a1b5]">
      <span className="absolute -right-px h-[31px] w-[31px] rounded-full bg-[#3f637f] shadow-[0_3px_4px_rgba(0,0,0,0.3)]" />
    </span>
  );
}

function Row({ title, sub, toggle }: { title?: string; sub: React.ReactNode; toggle?: boolean }) {
  return (
    <div className="flex h-[96.4px] shrink-0 items-center justify-between pl-6">
      <div className="flex h-[60px] flex-col justify-end whitespace-nowrap">
        {title && <span className="text-[24.1px] leading-[30px] text-[#262626]">{title}</span>}
        <span className="text-[21.1px] leading-[30px] text-[#707070]">{sub}</span>
      </div>
      {toggle && <Toggle />}
    </div>
  );
}

function Subheader({ children }: { children: React.ReactNode }) {
  return <div className="flex h-[72.5px] shrink-0 items-center pl-6 text-[21.1px] text-[#707070]">{children}</div>;
}

function Divider() {
  return <div className="mt-3 h-[1.5px] shrink-0 bg-[#dedede]" />;
}

function SettingsPanel() {
  return (
    <div className="relative z-10 flex w-[603px] flex-col bg-white shadow-[2px_0_7px_rgba(0,0,0,0.4)]">
      <div className="flex h-[97px] shrink-0 items-center bg-[#3f637f] text-white">
        <svg viewBox="0 0 20 30" className="ml-8 h-[30px] w-5" fill="none" stroke="currentColor" strokeWidth="4.6">
          <path d="M16.5 3L4.5 15L16.5 27" />
        </svg>
        <span className="ml-8 text-[30px] leading-none">Settings</span>
      </div>
      <div className="flex min-h-0 flex-1">
        <div className="flex min-w-0 flex-1 flex-col overflow-hidden">
          <div className="-mt-[62px] flex flex-col">
            <Row sub="Manage saved urls" />
            <Row title="Base maps" sub="Manage base maps" />
          </div>
          <Divider />
          <Subheader>Map</Subheader>
          <Row title="Zoom control" sub="Show zoom in/out control" toggle />
          <Row title="Display current zoom" sub="Show current zoom level" toggle />
          <Row title="Address search" sub="Show address search bar" toggle />
          <Row title="Display coordinates" sub="Show cursor coordinates" toggle />
          <Row title="Display scale" sub="Show map scale" toggle />
          <Row title="Max features" sub="Maximum features that should be rendered per tile" />
          <Divider />
          <Subheader>Project</Subheader>
          <Row
            title="Rename project"
            sub={
              <>
                Rename <b className="font-bold">New project</b> project
              </>
            }
          />
        </div>
        <div className="flex w-[17px] shrink-0 justify-center bg-[#f5f5f5] pt-[225px]">
          <div className="h-[636px] w-3 rounded-full bg-[#828284]" />
        </div>
      </div>
    </div>
  );
}

function Rail() {
  return (
    <div className="flex w-[84px] shrink-0 flex-col border-r border-[#4f7591] bg-[#3f637f] text-white">
      <div className="flex h-[97px] items-center justify-center">
        <Logo />
      </div>
      <div className="flex h-[60px] items-center justify-center">
        <Icon name="box" className="h-9 w-9" />
      </div>
      <div className="flex h-[60px] items-center justify-center">
        <Icon name="layers" className="h-9 w-9" />
      </div>
      <div className="-mr-px flex h-[60px] items-center justify-center bg-white text-[#3f637f]">
        <Icon name="cog" className="h-9 w-9" />
      </div>
    </div>
  );
}

/* ---------- map controls ---------- */

const BOX = "flex flex-col overflow-hidden rounded-[6px] border-2 border-black/25 bg-white bg-clip-padding text-[#1c1c1c]";

function MapTools() {
  return (
    <div className="absolute right-4 top-4 flex w-[50px] flex-col">
      <div className={`${BOX} h-[50px] items-center justify-center`}>
        <Icon name="map" className="h-9 w-9" />
      </div>
      <div className={`${BOX} mt-4 h-[50px] items-center justify-center`}>
        <Icon name="grid" className="h-9 w-9" />
      </div>
      <div className={`${BOX} mt-[17px] h-[95px]`}>
        <div className="flex flex-1 items-center justify-center border-b border-[#ccc]">
          <svg viewBox="0 0 20 20" className="h-5 w-5" stroke="currentColor" strokeWidth="3.6">
            <path d="M10 1V19M.5 10H19.5" />
          </svg>
        </div>
        <div className="flex flex-1 items-center justify-center">
          <svg viewBox="0 0 20 20" className="h-5 w-5" stroke="currentColor" strokeWidth="3.6">
            <path d="M.5 10H19.5" />
          </svg>
        </div>
      </div>
      <div className={`${BOX} mt-[17px] h-12 items-center justify-center font-['Liberation_Sans',sans-serif] text-[18px] font-bold`}>
        4
      </div>
      <div className="mt-[18px] flex h-[139px] flex-col rounded-[6px] border-2 border-black/25 bg-white/50 bg-clip-padding text-[#6f777b]">
        <div className="flex h-[44px] items-center justify-center border-b border-black/10">
          <svg viewBox="0 0 34 28" className="h-7 w-[34px]" fill="none" stroke="currentColor" strokeWidth="2.8">
            <rect x="1.6" y="1.6" width="30.8" height="24.8" rx="2" />
            <path d="M7.5 13.5V8H13.5M26.5 14.5V20H20.5" />
          </svg>
        </div>
        <div className="flex h-[44px] items-center justify-center">
          <svg viewBox="0 0 30 30" className="h-[30px] w-[30px]" fill="currentColor">
            <path d="M13 3.5L17 1L28 9.5L23.5 13Z M2 10L7.5 6L20 18L15 21.5Z M23 14.5L27 12.5L27.5 16Z" />
            <path d="M1.5 2L28 28M3 17.5L15 26.5L19 23.5" fill="none" stroke="currentColor" strokeWidth="2.4" />
          </svg>
        </div>
        <div className="flex h-[45px] items-center justify-center gap-0.5 pl-0.5">
          <svg viewBox="0 0 36 28" className="h-7 w-9" fill="currentColor">
            <path d="M12 0L24 9.6L12 19.2L0 9.6Z" />
            <path d="M1 15L12 23.5L23 15" fill="none" stroke="currentColor" strokeWidth="2.6" />
            <path d="M31 4L35 11H27Z M31 21L35 14H27Z" />
          </svg>
        </div>
      </div>
      <div className={`${BOX} mt-[17px] h-[183px] divide-y divide-[#ccc]`}>
        {DRAW_ICONS.map((d) => (
          <div key={d.key} className="flex flex-1 items-center justify-center">
            <svg viewBox="0 0 24 24" className="h-[25px] w-[25px]" fill="currentColor">
              {d.body}
            </svg>
          </div>
        ))}
      </div>
    </div>
  );
}

function MapView() {
  return (
    <div className="relative min-w-0 flex-1 font-['Liberation_Sans',Arial,sans-serif] text-[16.85px] text-[#333]">
      <WorldMap />
      <div className="absolute left-[18px] top-[18px] flex h-[58px] w-[522px] items-center justify-end rounded-[6px] bg-white pr-4 shadow-[0_2px_3px_rgba(0,0,0,0.4)]">
        <MapOffIcon />
        <span className="ml-4 h-[30px] w-px bg-[#ddd]" />
        <Icon name="magnify" className="ml-[13px] h-9 w-9 text-[#3a6284]" />
      </div>
      <MapTools />
      <div className="absolute bottom-[7px] left-2 flex items-end gap-[22px] leading-none">
        <div className="flex flex-col items-start">
          <div className="flex h-6 w-[88px] items-center border-x-2 border-[#777] bg-white/50 pl-2">500 km</div>
          <div className="flex h-[26px] w-[141px] items-center border-2 border-b-0 border-t-[3px] border-[#777] bg-white/50 pl-2">
            500 mi
          </div>
        </div>
        <div className="flex h-6 w-[251px] items-center justify-center whitespace-nowrap bg-white/50">
          Lat, Lng: 24.307679, 52.886124
        </div>
      </div>
      <div className="absolute bottom-0 right-0 flex h-6 w-[468px] items-center justify-center whitespace-nowrap bg-white leading-none">
        Leaflet, Map data © OpenStreetMap contributors, CC-BY-SA
      </div>
    </div>
  );
}

/* ---------- page ---------- */

export default function App() {
  return (
    <div className="relative h-[1304px] w-[2036px] overflow-hidden bg-[#fefefe] pl-[60px] pt-[61px] font-[Roboto,sans-serif]">
      <div className="flex h-[1097px] w-[1904px] flex-col overflow-hidden rounded-[15px] shadow-[0_0_2px_rgba(0,0,0,0.45),0_28px_60px_rgba(0,0,0,0.46)]">
        <div className="relative z-20 flex h-[42px] shrink-0 items-center bg-[#f1f0f0]">
          <div className="flex w-[300px] gap-[11.5px] pl-[11px]">
            <span className="h-[18.5px] w-[18.5px] rounded-full bg-[#ed6a5e]" />
            <span className="h-[18.5px] w-[18.5px] rounded-full bg-[#f5bf4f]" />
            <span className="h-[18.5px] w-[18.5px] rounded-full bg-[#61c554]" />
          </div>
          <div className="flex-1 text-center font-[Inter,sans-serif] text-[19.2px] font-bold text-[#454545]">MapCache</div>
          <div className="w-[302px]" />
        </div>
        <div className="flex min-h-0 flex-1">
          <Rail />
          <SettingsPanel />
          <MapView />
        </div>
      </div>

      <div className="absolute left-[145px] top-[899px] z-30 h-[95px] w-[580px] rounded-[3px] border-[7px] border-[#6cf0fb]" />
      <div className="absolute left-[431px] top-[992px] z-30 h-[248px] w-[200px] rounded-bl-[3px] border-b-[7px] border-l-[7px] border-[#6cf0fb]" />
      <div className="absolute left-[665px] top-[1197px] whitespace-nowrap font-['Liberation_Sans',Arial,sans-serif] text-[66.6px] leading-[76px] text-black">
        Click to adjust max features
      </div>
    </div>
  );
}
